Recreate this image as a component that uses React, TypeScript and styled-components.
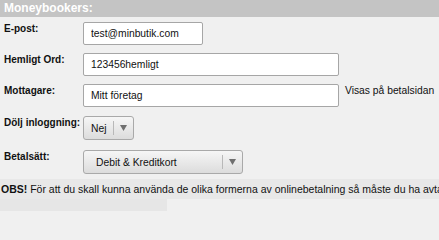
import styled, { createGlobalStyle } from "styled-components"

const GlobalStyle = createGlobalStyle`
  html, body {
    margin: 0;
    padding: 0;
    background: #f0f0f0;
    font-family: "Liberation Sans", Arial, sans-serif;
    color: #111;
    overflow: hidden;
  }
`

const Header = styled.div`
  height: 17px;
  line-height: 17px;
  background: #c4c4c4;
  color: #fff;
  font-size: 12px;
  font-weight: bold;
  padding-left: 4px;
`

const Form = styled.div`
  display: flex;
  flex-direction: column;
  padding: 5px 0 0 4px;
`

const Row = styled.div<{ $mt?: number }>`
  display: flex;
  align-items: flex-start;
  margin-top: ${(p) => p.$mt ?? 0}px;
`

const Label = styled.label`
  width: 79px;
  flex-shrink: 0;
  font-size: 10px;
  font-weight: bold;
  line-height: 12px;
  padding-top: 1px;
  white-space: nowrap;
`

const TextInput = styled.input<{ $w: number }>`
  box-sizing: border-box;
  width: ${(p) => p.$w}px;
  height: 23px;
  margin: 0;
  border: 1px solid #a6a6a6;
  border-radius: 2px;
  background: #fff;
  padding: 0 7px;
  font-family: inherit;
  font-size: 10.3px;
  color: #111;
  outline: none;
`

const Hint = styled.span`
  font-size: 10.3px;
  line-height: 12px;
  padding: 1px 0 0 6px;
  white-space: nowrap;
`

const Select = styled.div<{ $w: number; $pad: number }>`
  box-sizing: border-box;
  width: ${(p) => p.$w}px;
  height: 24px;
  display: flex;
  align-items: center;
  border: 1px solid #a9a9a9;
  border-radius: 3px;
  background: linear-gradient(#f6f6f6, #dcdcdc);
  padding-left: ${(p) => p.$pad}px;
  font-size: 10.3px;
  white-space: nowrap;
`

const SelectText = styled.span`
  flex: 1;
`

const ArrowPart = styled.span`
  width: 19px;
  height: 14px;
  border-left: 1px solid #b8b8b8;
  display: flex;
  align-items: center;
  justify-content: center;
`

const Obs = styled.div`
  margin-top: 5px;
  height: 20px;
  line-height: 20px;
  background: #e8e8e8;
  font-size: 10.5px;
  padding-left: 1px;
  white-space: nowrap;
  overflow: hidden;
`

const Bottom = styled.div`
  display: flex;
  height: 12px;
`

const BottomLeft = styled.div`
  width: 167px;
  background: #e6e6e6;
`

function Arrow() {
  return (
    <ArrowPart>
      <svg width="7" height="6" viewBox="0 0 7 6">
        <polygon points="0,0 7,0 3.5,6" fill="#6f6f6f" />
      </svg>
    </ArrowPart>
  )
}

export default function App() {
  return (
    <>
      <GlobalStyle />
      <Header>Moneybookers:</Header>
      <Form>
        <Row>
          <Label>E-post:</Label>
          <TextInput $w={120} defaultValue="test@minbutik.com" />
        </Row>
        <Row $mt={8}>
          <Label>Hemligt Ord:</Label>
          <TextInput $w={256} defaultValue="123456hemligt" />
        </Row>
        <Row $mt={8}>
          <Label>Mottagare:</Label>
          <TextInput $w={256} defaultValue="Mitt företag" />
          <Hint>Visas på betalsidan</Hint>
        </Row>
        <Row $mt={9}>
          <Label>Dölj inloggning:</Label>
          <Select $w={51} $pad={7}>
            <SelectText>Nej</SelectText>
            <Arrow />
          </Select>
        </Row>
        <Row $mt={10}>
          <Label>Betalsätt:</Label>
          <Select $w={160} $pad={12}>
            <SelectText>Debit &amp; Kreditkort</SelectText>
            <Arrow />
          </Select>
        </Row>
      </Form>
      <Obs>
        <b>OBS!</b> För att du skall kunna använda de olika formerna av onlinebetalning så måste du ha avtal
      </Obs>
      <Bottom>
        <BottomLeft />
      </Bottom>
    </>
  )
}
